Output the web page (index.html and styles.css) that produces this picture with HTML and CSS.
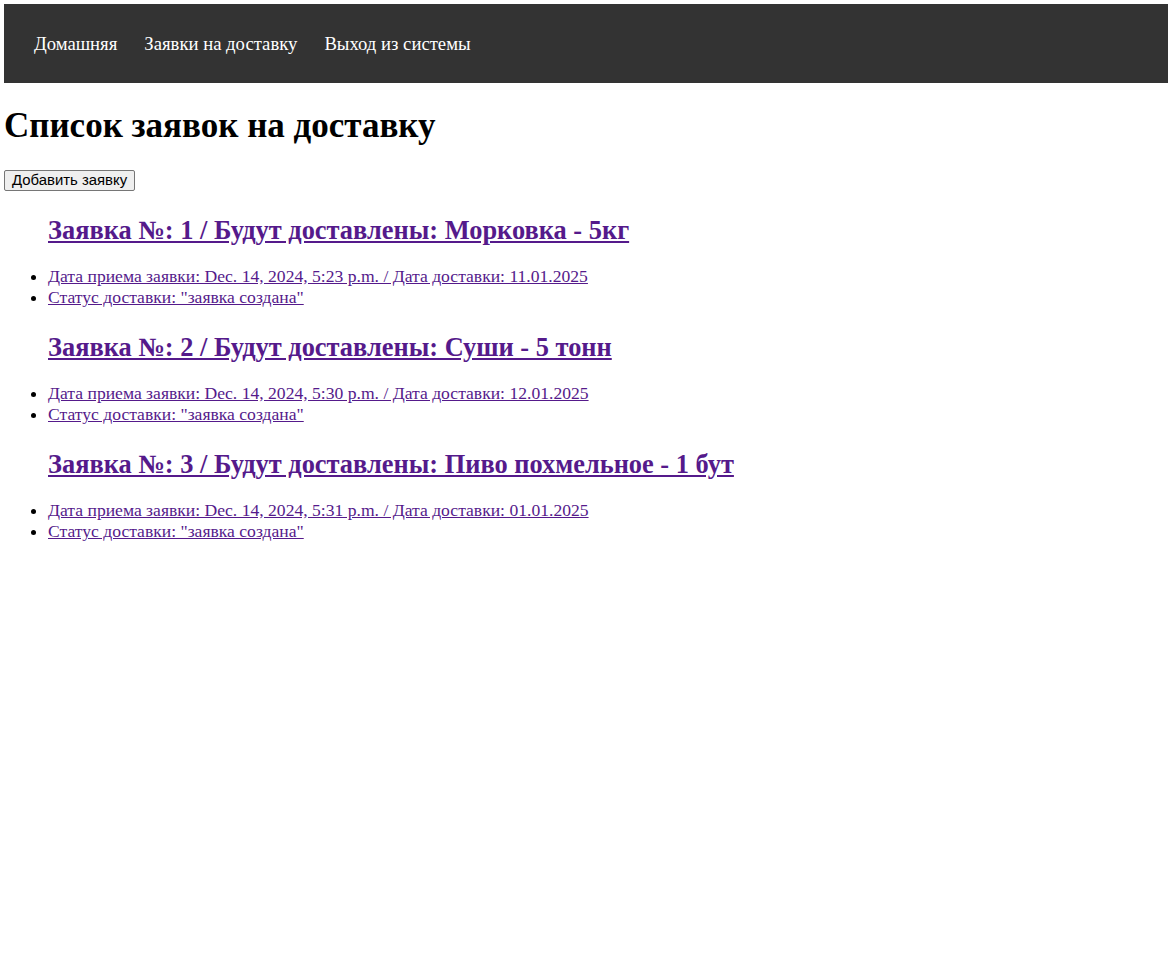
FILE: index.html
```html
<!DOCTYPE html>
<html lang="ru">
<head>
<meta charset="utf-8">
<title>Список заявок на доставку</title>
<link rel="stylesheet" href="styles.css">
</head>
<body>
<nav class="topnav">
  <a class="navlink" href="#">Домашняя</a>
  <a class="navlink" href="#">Заявки на доставку</a>
  <a class="navlink" href="#">Выход из системы</a>
</nav>
<h1 class="title">Список заявок на доставку</h1>
<div class="actions"><button class="addbtn" type="button">Добавить заявку</button></div>
<ul class="orders">
  <h2 class="order-title"><a class="link" href="#">Заявка №: 1 / Будут доставлены: Морковка - 5кг</a></h2>
  <li class="order-line"><a class="link" href="#">Дата приема заявки: Dec. 14, 2024, 5:23 p.m. / Дата доставки: 11.01.2025</a></li>
  <li class="order-line"><a class="link" href="#">Статус доставки: "заявка создана"</a></li>
  <h2 class="order-title"><a class="link" href="#">Заявка №: 2 / Будут доставлены: Суши - 5 тонн</a></h2>
  <li class="order-line"><a class="link" href="#">Дата приема заявки: Dec. 14, 2024, 5:30 p.m. / Дата доставки: 12.01.2025</a></li>
  <li class="order-line"><a class="link" href="#">Статус доставки: "заявка создана"</a></li>
  <h2 class="order-title"><a class="link" href="#">Заявка №: 3 / Будут доставлены: Пиво похмельное - 1 бут</a></h2>
  <li class="order-line"><a class="link" href="#">Дата приема заявки: Dec. 14, 2024, 5:31 p.m. / Дата доставки: 01.01.2025</a></li>
  <li class="order-line"><a class="link" href="#">Статус доставки: "заявка создана"</a></li>
</ul>
</body>
</html>
```
FILE: styles.css
```css
body {
  margin: 4px;
  font-family: "Liberation Serif", "Times New Roman", serif;
  font-size: 16px;
  color: #000;
}
.topnav {
  background: #333333;
  height: 79px;
  display: flex;
  align-items: center;
  gap: 27px;
  padding-left: 30px;
}
.navlink {
  color: #ffffff;
  text-decoration: none;
  font-size: 18.7px;
}
.title {
  font-size: 35px;
  line-height: 40px;
  margin: 23px 0 24px;
}
.actions {
  display: flex;
  margin-bottom: 24px;
}
.addbtn {
  font-family: "Liberation Sans", Arial, sans-serif;
  font-size: 14.9px;
  line-height: 15px;
  padding: 1px 7px;
  border: 1px solid #767676;
  border-radius: 2px;
  background: #efefef;
  color: #000;
  height: 21px;
}
.orders {
  padding-left: 44px;
  margin: 0;
}
.link {
  color: #551a8b;
}
.order-title {
  font-size: 26.4px;
  line-height: 31px;
  margin: 24px 0 20px;
}
.order-line {
  font-size: 17.6px;
  line-height: 21px;
}
```
